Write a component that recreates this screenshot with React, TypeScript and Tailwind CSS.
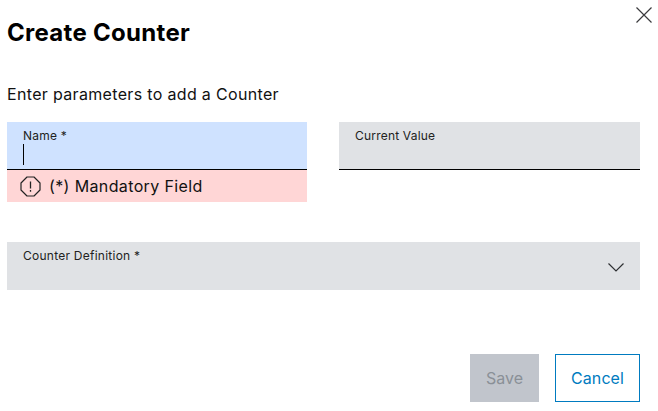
export default function App() {
  return (
    <div className="w-[658px] h-[411px] bg-white flex flex-col pl-[7px] pr-[18px] text-black relative overflow-hidden" style={{ fontFamily: '"Inter", "Liberation Sans", sans-serif' }}>
      <button className="absolute left-[636px] top-[7px] w-4 h-4 flex">
        <svg width="16" height="16" viewBox="0 0 16 16" fill="none" stroke="#3a3a3d" strokeWidth="1.2"><path d="M0.5 0.5L15.5 15.5M15.5 0.5L0.5 15.5" /></svg>
      </button>
      <h1 className="mt-[18px] h-[30px] text-[24px] leading-[30px] font-bold tracking-[0.3px]">Create Counter</h1>
      <p className="mt-[34px] h-[24px] text-[16px] leading-[24px] tracking-[0.33px] text-[#111]">Enter parameters to add a Counter</p>
      <div className="mt-[16px] grid grid-cols-[300px_301px] gap-x-[32px] h-[80px]">
        <div className="flex flex-col">
          <div className="h-[48px] bg-[#cfe2ff] border-b border-black pl-4 pt-[6px] flex flex-col">
            <span className="text-[12px] leading-[16px] tracking-[0.2px] text-[#222]">Name *</span>
            <span className="w-px h-[21px] bg-black" />
          </div>
          <div className="h-[32px] bg-[#ffd6d6] flex items-center pl-[13px] gap-[8px]">
            <svg width="21" height="21" viewBox="0 0 21 21" fill="none" stroke="#222" strokeWidth="1.2">
              <path d="M7 1h7l6 6v7l-6 6H7l-6-6V7z" strokeLinejoin="round" />
              <path d="M10.5 5.5v7M10.5 14v1.8" strokeWidth="1.3" />
            </svg>
            <span className="text-[16px] leading-[24px] tracking-[0.37px] text-[#111]">(*) Mandatory Field</span>
          </div>
        </div>
        <div className="h-[48px] bg-[#e0e2e5] border-b border-black pl-4 pt-[6px]">
          <span className="block text-[12px] leading-[16px] tracking-[0.2px] text-[#222]">Current Value</span>
        </div>
      </div>
      <div className="mt-[40px] h-[48px] bg-[#e0e2e5] pl-4 pt-[6px] pr-[16px] flex justify-between">
        <span className="text-[12px] leading-[16px] tracking-[0.25px] text-[#222]">Counter Definition *</span>
        <svg className="mt-[15px]" width="16" height="9" viewBox="0 0 16 9" fill="none" stroke="#2e3033" strokeWidth="1.2"><path d="M0.5 0.5L8 8L15.5 0.5" /></svg>
      </div>
      <div className="mt-[64px] flex justify-end gap-[16px]">
        <button className="w-[69px] h-[48px] bg-[#c1c5cc] text-[#8a9097] text-[16px]">Save</button>
        <button className="w-[85px] h-[48px] border border-[#007bc0] text-[#007bc0] text-[16px] tracking-[0.1px]">Cancel</button>
      </div>
    </div>
  );
}
